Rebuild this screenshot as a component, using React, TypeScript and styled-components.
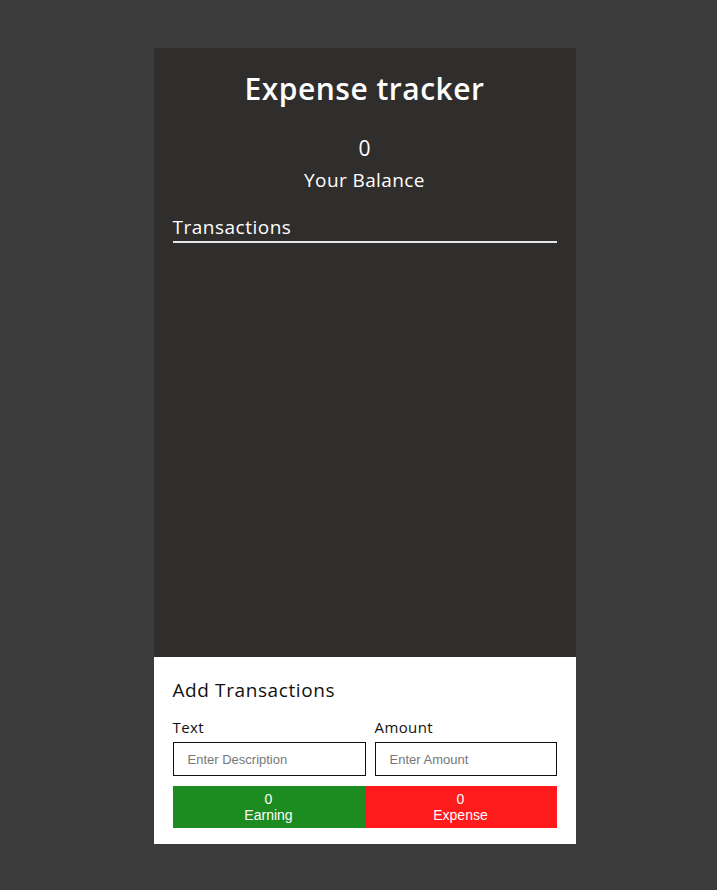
import styled, { createGlobalStyle } from "styled-components";

const GlobalStyle = createGlobalStyle`
    html, body {
        margin: 0;
        padding: 0;
        background: #3b3b3b;
    }
    body {
        font-family: "Open Sans", "Liberation Sans", sans-serif;
    }
`;

const Page = styled.div`
    display: flex;
    justify-content: center;
    padding-top: 48px;
    min-height: 890px;
    box-sizing: border-box;
`;

const Card = styled.div`
    width: 422px;
    margin-left: 12px;
    display: flex;
    flex-direction: column;
`;

const TopSection = styled.div`
    background: #302e2c;
    height: 609px;
    padding: 18px 19px 0;
    box-sizing: border-box;
    color: #fff;
`;

const Title = styled.h1`
    margin: 0;
    text-align: center;
    font-size: 30px;
    font-weight: 600;
    letter-spacing: 0.5px;
    line-height: 46px;
`;

const Balance = styled.div`
    margin-top: 21px;
    text-align: center;
    font-size: 21px;
    line-height: 30px;
`;

const BalanceLabel = styled.div`
    margin-top: 2px;
    text-align: center;
    font-size: 19px;
    letter-spacing: 0.4px;
    line-height: 30px;
`;

const SectionTitle = styled.h3`
    margin: 19px 0 0;
    font-size: 19px;
    font-weight: 400;
    letter-spacing: 0.5px;
    line-height: 26px;
    border-bottom: 2px solid #e6e6e6;
    padding-bottom: 1px;
`;

const BottomSection = styled.div`
    background: #fff;
    padding: 20px 19px 16px;
    color: #111;
`;

const FormTitle = styled.h3`
    margin: 0;
    font-size: 19px;
    font-weight: 400;
    letter-spacing: 0.6px;
    line-height: 26px;
`;

const FieldRow = styled.div`
    display: grid;
    grid-template-columns: 193px minmax(0, 1fr);
    gap: 9px;
    margin-top: 14px;
`;

const Field = styled.div`
    display: flex;
    flex-direction: column;
    min-width: 0;
`;

const Label = styled.label`
    font-size: 15px;
    letter-spacing: 0.4px;
    line-height: 20px;
    margin-bottom: 5px;
`;

const Input = styled.input`
    width: 100%;
    min-width: 0;
    height: 34px;
    box-sizing: border-box;
    border: 1px solid #111;
    padding: 0 14px;
    font-family: "Liberation Sans", Arial, sans-serif;
    font-size: 13px;
    outline: none;

    &::placeholder {
        color: #777;
    }
`;

const Buttons = styled.div`
    display: grid;
    grid-template-columns: 1fr 1fr;
    margin-top: 10px;
`;

const TotalButton = styled.button<{ $tone: "earn" | "spend" }>`
    height: 42px;
    border: none;
    background: ${(p) => (p.$tone === "earn" ? "#1c8c20" : "#ff1b1b")};
    color: #fff;
    font-family: "Liberation Sans", Arial, sans-serif;
    font-size: 14px;
    line-height: 16px;
    padding: 0;
    cursor: pointer;
`;

function App() {
    const earning = 0;
    const expense = 0;

    return (
        <>
            <GlobalStyle />
            <Page>
                <Card>
                    <TopSection>
                        <Title>Expense tracker</Title>
                        <Balance>{earning - expense}</Balance>
                        <BalanceLabel>Your Balance</BalanceLabel>
                        <SectionTitle>Transactions</SectionTitle>
                    </TopSection>

                    <BottomSection>
                        <FormTitle>Add Transactions</FormTitle>
                        <FieldRow>
                            <Field>
                                <Label>Text</Label>
                                <Input placeholder="Enter Description" />
                            </Field>
                            <Field>
                                <Label>Amount</Label>
                                <Input placeholder="Enter Amount" />
                            </Field>
                        </FieldRow>
                        <Buttons>
                            <TotalButton $tone="earn">
                                {earning}
                                <br />
                                Earning
                            </TotalButton>
                            <TotalButton $tone="spend">
                                {expense}
                                <br />
                                Expense
                            </TotalButton>
                        </Buttons>
                    </BottomSection>
                </Card>
            </Page>
        </>
    );
}

export default App;
